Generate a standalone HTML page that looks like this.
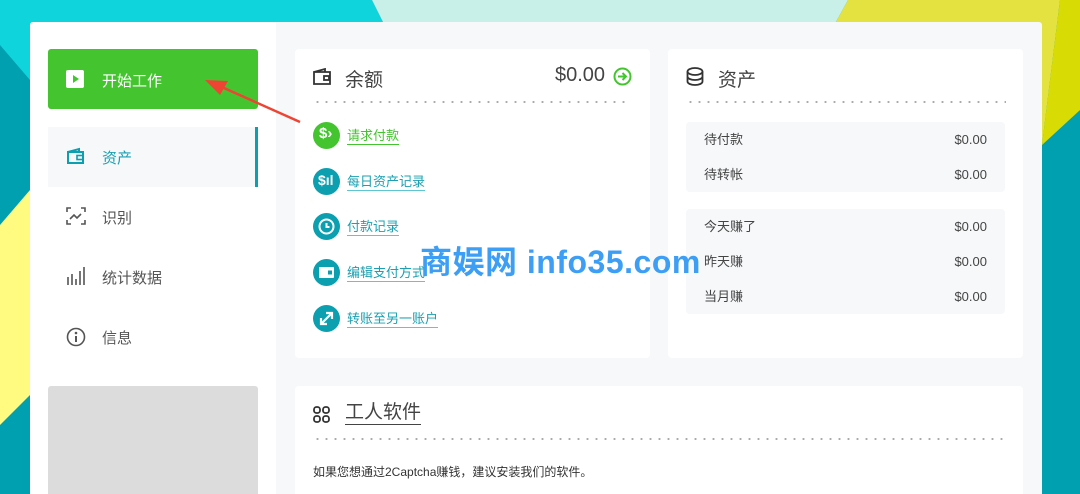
<!DOCTYPE html>
<html><head><meta charset="utf-8"><style>
*{margin:0;padding:0;box-sizing:border-box}
html,body{width:1080px;height:494px;overflow:hidden}
body{position:relative;font-family:"Liberation Sans","Noto Sans CJK SC",sans-serif;background:#00a0b0}
.bg{position:absolute;left:0;top:0}
.panel{position:absolute;left:30px;top:22px;width:1012px;height:472px;background:#f6f8fa;border-radius:3px 3px 0 0;overflow:hidden}
.side{position:absolute;left:0;top:0;width:246px;height:472px;background:#fff;border-radius:3px 0 0 0}
.start{position:absolute;left:18px;top:27px;width:210px;height:60px;background:#44c52f;border-radius:3px;color:#fff;font-size:15px}
.start span{position:absolute;left:54px;top:21px}
.nav{position:absolute;left:18px;width:210px;height:60px;font-size:15px;color:#555}
.nav span{position:absolute;left:54px;top:20px}
.nav svg{position:absolute;left:18px;top:20px}
.gray{position:absolute;left:18px;top:364px;width:210px;height:120px;background:#dcdcdc;border-radius:3px}
.card{position:absolute;background:#fff;border-radius:4px}
.dots{position:absolute;height:2px;background-image:radial-gradient(circle,#aaa 1px,transparent 1.2px);background-size:9px 2px}
.h{position:absolute;font-size:19px;color:#444}
.lk{position:absolute;left:52px;font-size:13px;color:#1aa0b2;border-bottom:1.5px solid #5cc7d3;line-height:16px}
.ic{position:absolute;left:18px;width:27px;height:27px;border-radius:50%;background:#0b9fb0}
.row{position:absolute;left:18px;width:319px;background:#f6f8fa;border-radius:4px}
.row div{height:35px;line-height:35px;font-size:13px;color:#444;padding:0 18px;display:flex;justify-content:space-between}
.wm{position:absolute;left:420px;top:237px;font-size:32px;font-weight:bold;color:#3d9ef6;font-family:"Liberation Sans","Noto Sans CJK SC",sans-serif;letter-spacing:0.5px}
</style></head><body>
<svg class="bg" width="1080" height="494">
<rect width="1080" height="494" fill="#00a0b0"/>
<polygon points="0,0 372,0 392,40 0,40" fill="#10d4dc"/>
<polygon points="0,0 40,0 40,40 30,80 0,45" fill="#10d4dc"/>
<polygon points="372,0 848,0 826,40 392,40" fill="#c9f0e8"/>
<polygon points="848,0 1060,0 1042,145 826,40" fill="#e4e240"/>
<polygon points="1060,0 1080,0 1080,110 1042,145" fill="#d9dc04"/>
<polygon points="0,225 30,190 30,395 0,425" fill="#fffb80"/>
</svg>
<div class="panel">
<div class="side">
<div class="start"><svg style="position:absolute;left:18px;top:21px" width="18" height="18"><rect width="18" height="18" rx="2" fill="#fff"/><polygon points="7,5 13,9 7,13" fill="#44c52f"/></svg><span>开始工作</span></div>
<div class="nav" style="top:105px;background:#f6f8fa;border-right:3px solid #0b9fb0;color:#1aa0b2"><svg width="20" height="18" viewBox="0 0 20 18"><path d="M2 5h15v11H2z M2 5l11-3v3" fill="none" stroke="#0b9fb0" stroke-width="2"/><rect x="11" y="8.5" width="6" height="4" fill="none" stroke="#0b9fb0" stroke-width="1.6"/></svg><span>资产</span></div>
<div class="nav" style="top:165px"><svg width="20" height="18" viewBox="0 0 20 18" fill="none" stroke="#555" stroke-width="1.6"><path d="M1 5V1h4M15 1h4v4M19 13v4h-4M5 17H1v-4M4 12l4-4 3 3 4-4"/></svg><span>识别</span></div>
<div class="nav" style="top:225px"><svg width="20" height="18" viewBox="0 0 20 18" stroke="#555" stroke-width="1.6"><path d="M2 10v8M6 7v11M10 12v6M14 4v14M18 0v18"/></svg><span>统计数据</span></div>
<div class="nav" style="top:285px"><svg width="20" height="20" viewBox="0 0 20 20"><circle cx="10" cy="10" r="8.5" fill="none" stroke="#555" stroke-width="1.6"/><circle cx="10" cy="6" r="1.3" fill="#555"/><path d="M10 9v6" stroke="#555" stroke-width="2"/></svg><span>信息</span></div>
<div class="gray"></div>
</div>
<div class="card" style="left:265px;top:27px;width:355px;height:309px">
<svg style="position:absolute;left:18px;top:19px" width="19" height="17" viewBox="0 0 19 17" fill="none" stroke="#333" stroke-width="1.8"><path d="M1 4h16v12H1z M1 4l11-3v3"/><rect x="11" y="8" width="5" height="4"/></svg>
<div class="h" style="left:50px;top:16px">余额</div>
<div class="h" style="left:260px;top:15px;font-size:20px">$0.00</div>
<svg style="position:absolute;left:318px;top:18px" width="19" height="19" viewBox="0 0 19 19" fill="none" stroke="#44c52f" stroke-width="2"><circle cx="9.5" cy="9.5" r="8"/><path d="M5 9.5h8M9.5 6l3.5 3.5-3.5 3.5"/></svg>
<div class="dots" style="left:18px;top:52px;width:315px"></div>
<div class="ic" style="top:73px;background:#44c52f"><span style="position:absolute;left:6px;top:3px;color:#fff;font-size:15px;font-weight:bold">$›</span></div>
<div class="lk" style="top:79px;color:#44c52f;border-color:#44c52f">请求付款</div>
<div class="ic" style="top:119px"><span style="position:absolute;left:5px;top:4px;color:#fff;font-size:14px;font-weight:bold">$ıl</span></div>
<div class="lk" style="top:125px">每日资产记录</div>
<div class="ic" style="top:164px"><svg width="27" height="27"><circle cx="13.5" cy="13.5" r="7" fill="none" stroke="#fff" stroke-width="2"/><path d="M13.5 10v4h3" stroke="#fff" stroke-width="2" fill="none"/></svg></div>
<div class="lk" style="top:170px">付款记录</div>
<div class="ic" style="top:210px"><svg width="27" height="27"><rect x="6" y="8" width="15" height="11" rx="1" fill="#fff"/><rect x="15" y="11.5" width="4" height="4" fill="#0b9fb0"/></svg></div>
<div class="lk" style="top:216px">编辑支付方式</div>
<div class="ic" style="top:256px"><svg width="27" height="27" stroke="#fff" stroke-width="2.2" fill="none"><path d="M8 19L19 8M13 8h6v6M8 13v6h6"/></svg></div>
<div class="lk" style="top:262px">转账至另一账户</div>
</div>
<div class="card" style="left:638px;top:27px;width:355px;height:309px">
<svg style="position:absolute;left:18px;top:18px" width="18" height="19" viewBox="0 0 18 19" fill="none" stroke="#333" stroke-width="1.8"><ellipse cx="9" cy="4.5" rx="7.5" ry="3.5"/><path d="M1.5 4.5v10c0 2 3.4 3.5 7.5 3.5s7.5-1.5 7.5-3.5v-10M1.5 9.5c0 2 3.4 3.5 7.5 3.5s7.5-1.5 7.5-3.5"/></svg>
<div class="h" style="left:50px;top:16px">资产</div>
<div class="dots" style="left:18px;top:52px;width:320px"></div>
<div class="row" style="top:73px"><div><span>待付款</span><span>$0.00</span></div><div><span>待转帐</span><span>$0.00</span></div></div>
<div class="row" style="top:160px"><div><span>今天赚了</span><span>$0.00</span></div><div><span>昨天赚</span><span>$0.00</span></div><div><span>当月赚</span><span>$0.00</span></div></div>
</div>
<div class="card" style="left:265px;top:364px;width:728px;height:120px">
<svg style="position:absolute;left:18px;top:20px" width="17" height="17" viewBox="0 0 17 17" fill="none" stroke="#333" stroke-width="1.8"><rect x="1" y="1" width="6" height="6" rx="2.5"/><rect x="10" y="1" width="6" height="6" rx="2.5"/><rect x="1" y="10" width="6" height="6" rx="2.5"/><rect x="10" y="10" width="6" height="6" rx="2.5"/></svg>
<div class="h" style="left:50px;top:16px;border-bottom:1.5px solid #444;line-height:22px">工人软件</div>
<div class="dots" style="left:18px;top:52px;width:690px"></div>
<div style="position:absolute;left:18px;top:77px;font-size:12px;color:#333">如果您想通过2Captcha赚钱，建议安装我们的软件。</div>
</div>
</div>
<svg class="bg" width="1080" height="494" style="pointer-events:none"><path d="M300 122L215 84" stroke="#ee4433" stroke-width="2.5"/><polygon points="205,80 228,81 220,95" fill="#ee4433"/></svg>
<div class="wm">商娱网 info35.com</div>
</body></html>
